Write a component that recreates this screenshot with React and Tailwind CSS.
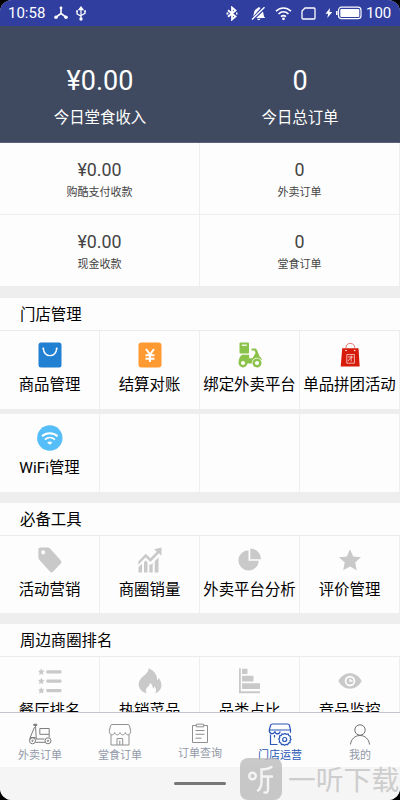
const stats = [
  ["¥0.00", "购酷支付收款"],
  ["0", "外卖订单"],
  ["¥0.00", "现金收款"],
  ["0", "堂食订单"],
];

const storeTools = [
  ["商品管理", BagIcon],
  ["结算对账", YenIcon],
  ["绑定外卖平台", ScooterIcon],
  ["单品拼团活动", GroupBuyIcon],
];

const mustHaveTools = [
  ["活动营销", TagIcon],
  ["商圈销量", TrendIcon],
  ["外卖平台分析", PieIcon],
  ["评价管理", StarIcon],
];

const rankings = [
  ["餐厅排名", RankListIcon],
  ["热销菜品", FlameIcon],
  ["品类占比", BarsIcon],
  ["竞品监控", EyeIcon],
];

const tabs = [
  ["外卖订单", DeliveryTabIcon],
  ["堂食订单", ShopTabIcon],
  ["订单查询", SearchTabIcon],
  ["门店运营", ManageTabIcon],
  ["我的", UserTabIcon],
];

function BagIcon() {
  return (
    <svg width="26" height="26" viewBox="0 0 26 26" fill="none">
      <rect x="1.500" y=".5" width="23" height="25" rx="2.500" fill="#2180d2" />
      <path d="M6.300 6.600c.5 4.400 3.200 7 6.700 7s6.200-2.600 6.700-7" stroke="#fff" strokeWidth="1.400" />
      <circle cx="6.300" cy="6.500" r="1" fill="#fff" />
      <circle cx="19.700" cy="6.500" r="1" fill="#fff" />
    </svg>
  );
}

function YenIcon() {
  return (
    <svg width="26" height="26" viewBox="0 0 26 26" fill="none">
      <rect x="1.500" y=".5" width="23" height="25" rx="3" fill="#ff9932" />
      <path d="M9 7l4 5.500L17 7M13 12v8M8.500 13.300h9M8.500 16.800h9" stroke="#fff" strokeWidth="2" />
    </svg>
  );
}

function ScooterIcon() {
  return (
    <svg width="26" height="26" viewBox="0 0 26 26" fill="none">
      <rect x="2.500" y=".5" width="9.500" height="11" rx="1" fill="#8bc34a" />
      <path d="M4.800 3.200h5" stroke="#fff" strokeWidth="1.300" />
      <path d="M14.500 6.500h4.200l1.300 1.400 2.600 6.500c1.300.9 2 2 2.200 3.600h-5.300l-3.300 3.400H1.700c-.2-4.100 1.100-7.100 3.400-8.700h7v3.500h3.400l3-5.200-1-2.500h-3z" fill="#8bc34a" />
      <circle cx="6" cy="21" r="4.400" fill="#8bc34a" />
      <circle cx="6" cy="21" r="2.100" fill="#fff" />
      <circle cx="20" cy="21" r="5.200" fill="#fdfdfd" />
      <circle cx="20" cy="21" r="4.500" fill="#8bc34a" />
      <circle cx="20" cy="21" r="2.100" fill="#fff" />
    </svg>
  );
}

function GroupBuyIcon() {
  return (
    <svg width="26" height="26" viewBox="0 0 26 26" fill="none">
      <path d="M9 8V5.500C9 3 10.800 1.400 13.300 1.400S17.700 3 17.700 5.500V8" stroke="#e0574f" strokeWidth=".8" />
      <path d="M5.200 6.300h16.300l1.200 18.300h-19z" fill="#d71b0b" />
      <circle cx="9" cy="8.500" r=".8" fill="#fff" />
      <circle cx="17.700" cy="8.500" r=".8" fill="#fff" />
      <path d="M9.800 12.500h7.600v8.700H9.800zM11 15h5.300M14.200 13.500v6M14 15.500l-3 3.500" stroke="#fbd8d4" strokeWidth=".8" />
    </svg>
  );
}

function WifiCircleIcon() {
  return (
    <svg width="26" height="26" viewBox="0 0 26 26" fill="none">
      <circle cx="12.800" cy="13" r="12.700" fill="#55bdf8" />
      <path d="M5 11.300c4.500-4.100 10.900-4.100 15.600 0M7.900 14.600c3-2.700 7-2.700 10 0" stroke="#fff" strokeWidth="1.900" />
      <path d="M10.200 17.400c1.700-1.300 3.500-1.300 5.200 0l-2.600 2.300z" fill="#fff" />
    </svg>
  );
}

function TagIcon() {
  return (
    <svg width="26" height="26" viewBox="0 0 26 26" fill="#c9c9c9">
      <path fillRule="evenodd" d="M3.300.5h7.500c.8 0 1.400.3 2 .8l11 12.300c.8.900.8 2 0 2.800l-7.900 8.400c-.8.900-2 .9-2.800 0L2.200 12.700c-.5-.6-.8-1.200-.8-2V2.300C1.400 1.200 2.200.5 3.300.5zM6.200 3.300a2 2 0 1 0 0 4.100 2 2 0 0 0 0-4.100z" />
    </svg>
  );
}

function TrendIcon() {
  return (
    <svg width="26" height="26" viewBox="0 0 26 26" fill="#c9c9c9">
      <path d="M1.300 14.600l7.400-7.800 4.700 4.500 6.300-6.500-2.500-2.500L24.500.5v8.300l-2.600-2.500-8.500 8.600L8.700 10.300l-7.400 7.500z" />
      <path d="M1.500 20l3.500-3.200v8.700H1.500zM7 15.300l1.700-1.700 1.800 1.700v10.200H7zM12.300 17l1.200 1 2.200-2v9.500h-3.400zM17.700 14.300l3.800-3.800v15h-3.800z" />
    </svg>
  );
}

function PieIcon() {
  return (
    <svg width="26" height="26" viewBox="0 0 26 26" fill="#c9c9c9">
      <path d="M11.500 3.200v10.500h10.300A10.200 10.200 0 1 1 11.500 3.200z" />
      <path d="M13.300 1.500c6 .2 10.400 4.500 10.600 10.700H13.300z" />
    </svg>
  );
}

function StarIcon() {
  return (
    <svg width="26" height="26" viewBox="0 0 26 26" fill="#c9c9c9">
      <path d="M13 2.300l3.200 7.100 7.700.9-5.700 5.200 1.500 7.800-6.700-3.900-6.800 3.900 1.500-7.800L2 10.300l7.800-.9z" />
    </svg>
  );
}

function RankListIcon() {
  return (
    <svg width="26" height="26" viewBox="0 0 26 26" fill="#c9c9c9">
      {[0, 9.3, 18.7].map((y) => (
        <g key={y} transform={`translate(0 ${y})`}>
          <path d="M4.300.4l1 2.100 2.300.3-1.700 1.600.5 2.500-2.100-1.200-2.200 1.200.5-2.500L1 2.800l2.300-.3z" />
          <rect x="9.300" y="2.200" width="15.200" height="3.300" rx="1.200" />
        </g>
      ))}
    </svg>
  );
}

function FlameIcon() {
  return (
    <svg width="26" height="26" viewBox="0 0 26 26" fill="#c9c9c9">
      <path d="M11.700.3c5.500 2.600 8.700 6.300 8.300 11.800 1-.4 1.500-1.300 1.700-2.300 4.800 6.700 3 12.900-3.500 15.500 1.500-3 .8-5.200-.9-7.100-.2 1.100-.6 1.900-1.400 2.400-.1-2.500-1-4.200-3-5.800.3 2.700-2.600 3.800-3.800 6.300-.5 1.500-.2 2.800.7 4.200-7.500-1.800-10.200-8.300-6.500-13.800C6 7.700 11.500 5.500 11.700.3z" />
    </svg>
  );
}

function BarsIcon() {
  return (
    <svg width="26" height="26" viewBox="0 0 26 26" fill="#c9c9c9">
      <path d="M2 .3h1.800v22.900h19.200v2H2z" />
      <rect x="5" y=".8" width="5.500" height="5.300" rx=".7" />
      <rect x="5" y="7.800" width="11.500" height="5.600" rx=".7" />
      <rect x="5" y="15.300" width="18" height="5.800" rx=".7" />
    </svg>
  );
}

function EyeIcon() {
  return (
    <svg width="26" height="26" viewBox="0 0 26 26" fill="none">
      <path d="M1.300 13C7 2.700 19 2.700 24.700 13 19 23.300 7 23.300 1.300 13z" fill="#c9c9c9" />
      <circle cx="13" cy="13" r="4.400" stroke="#fff" strokeWidth="1.700" />
      <path d="M13 10.800V13h2.500" stroke="#fff" strokeWidth="1.400" />
    </svg>
  );
}

function DeliveryTabIcon() {
  return (
    <svg width="26" height="24" viewBox="0 0 26 24" fill="none" stroke="#7d7d7d" strokeWidth="1">
      <path d="M6.800 1.200h3v1.300h-3z" fill="#7d7d7d" />
      <path d="M8.500 2.800L9.300 16M8.600 4.500H7.300L3.300 14.300M3 17v-2.500h5.500M12.800 5.500h9.400v5.800h-9.400zM8.500 16h9M22.200 11.300v3" />
      <circle cx="5.500" cy="17.800" r="3" />
      <circle cx="5.500" cy="17.800" r=".7" />
      <circle cx="21" cy="17.800" r="3" />
      <circle cx="21" cy="17.800" r=".7" />
      <path d="M8.500 19.300h9.500" />
    </svg>
  );
}

function ShopTabIcon() {
  return (
    <svg width="26" height="24" viewBox="0 0 26 24" fill="none" stroke="#919191" strokeWidth="1">
      <path d="M5 1.500h16c.8 0 1.300.5 1.500 1.200L23.700 8.500c.1 4-4.700 4.300-5.400 1-.8 3.100-4.500 3.100-5.300 0-.8 3.100-4.500 3.100-5.300 0-.7 3.300-5.500 3-5.400-1L3.500 2.700C3.700 2 4.200 1.500 5 1.500zM4 12v10h18V12M10 22v-6.500h5.700V22M12.800 17.500V22" />
    </svg>
  );
}

function SearchTabIcon() {
  return (
    <svg width="26" height="24" viewBox="0 0 26 24" fill="none" stroke="#8f8f8f" strokeWidth="1">
      <path d="M9 4.500H5.500v17h15v-17H17M9.300 3.200h7.400v2.600H9.300zM8.500 9.500h9M8.500 13.300h9M8.500 17.200h6" />
    </svg>
  );
}

function ManageTabIcon() {
  return (
    <svg width="26" height="24" viewBox="0 0 26 24" fill="none" stroke="#2956b8" strokeWidth="1.200">
      <path d="M5.500 1h15c1 0 1.700.5 2 1.500l1 4.500v2.800M5.500 1c-1 0-1.700.5-2 1.500L2.300 7h21.200M2.300 7c-.2 4.300 4.500 4.800 5.500 1.300.8 3.500 4.600 3.500 5.400 0M3.500 11.500v10h7M7.500 12v2.500" />
      <path d="M16.500 11.300l1.400-.9 1.500.9 1.700-.3.700 1.600 1.600.7-.2 1.700.8 1.400-1 1.400.1 1.700-1.600.6-.8 1.500-1.600-.3-1.500 1-1.400-1-1.700.2-.7-1.600-1.500-.8.3-1.600-.9-1.400 1-1.400-.1-1.700 1.600-.6.8-1.400z" />
      <circle cx="17.700" cy="16.500" r="2" />
    </svg>
  );
}

function UserTabIcon() {
  return (
    <svg width="26" height="24" viewBox="0 0 26 24" fill="none" stroke="#707070" strokeWidth="1">
      <circle cx="13" cy="7" r="5.200" />
      <path d="M3.500 21.500c.4-5.300 4.500-9 9.500-9s9.100 3.700 9.500 9" />
    </svg>
  );
}

function StatusBar() {
  return (
    <div className="flex h-[26px] shrink-0 items-center bg-[#303f9f] pl-2 pr-[7px] text-[15px] text-white">
      <span className="w-[39px]">10:58</span>
      <svg className="ml-[7px]" width="14" height="14" viewBox="0 0 14 14" fill="#fff" stroke="#fff">
        <path d="M7 2v5.500M7 7.500L2 11.200M7 7.500l5 3.700" strokeWidth="1.600" />
        <circle cx="7" cy="2" r="1.400" stroke="none" />
        <circle cx="2" cy="11.300" r="1.800" stroke="none" />
        <circle cx="12" cy="11.300" r="1.800" stroke="none" />
      </svg>
      <svg className="ml-[7px]" width="12" height="15" viewBox="0 0 12 15" fill="none" stroke="#fff" strokeWidth="1.200">
        <path d="M6 1.500V13M2 5.500v2.300l4 2.500M10 5.500v1.800L6 9.500M4 3.700L6 1l2 2.700z" />
        <circle cx="6" cy="13" r="1.100" fill="#fff" />
        <path d="M1.200 5.300h1.700M9.200 5.300h1.700" strokeWidth="2" />
      </svg>
      <svg className="ml-auto" width="12" height="15" viewBox="0 0 12 15" fill="none" stroke="#fff" strokeWidth="1.800">
        <path d="M2 4.300l7.500 6.200L6 13.500v-12l3.500 3L2 10.800" />
        <path d="M.5 7.500h2M10 7.500h1.500" />
      </svg>
      <svg className="ml-[13px]" width="15" height="15" viewBox="0 0 15 15" fill="#fff">
        <path d="M6 2.500l1-.8c1-.9 2 0 2.500.6L2.200 10.500l.8-3.800C3.500 4.500 4.300 3.300 6 2.500zM12 5.500l1 5 1.300 1.500H5.200zM6 12.800h3.500c-.6 1.800-2.900 1.800-3.500 0z" />
        <path d="M13.500 1.300L1 13.500" stroke="#fff" strokeWidth="1.400" />
      </svg>
      <svg className="ml-[9px]" width="17" height="15" viewBox="0 0 17 15" fill="none" stroke="#fff" strokeWidth="1.600">
        <path d="M1 5.200c4.500-4.200 10.500-4.200 15 0M3.500 8c3-2.800 7-2.800 10 0M6 10.700c1.600-1.400 3.400-1.400 5 0" />
        <circle cx="8.500" cy="12.800" r=".6" fill="#fff" />
      </svg>
      <svg className="ml-[9px]" width="15" height="13" viewBox="0 0 15 13" fill="none" stroke="#fff" strokeWidth="1.300">
        <path d="M4 1h9c.6 0 1 .4 1 1v9c0 .6-.4 1-1 1H2c-.6 0-1-.4-1-1V4z" />
      </svg>
      <svg className="ml-[9px]" width="8" height="12" viewBox="0 0 8 12" fill="#fff">
        <path d="M5 1L.5 6.700h2.700L2.300 11 7.300 5H4.500z" />
      </svg>
      <svg className="ml-[3px]" width="26" height="14" viewBox="0 0 26 14" fill="none">
        <rect x="2.500" y="1.200" width="22.500" height="11.500" rx="3" stroke="#fff" strokeWidth="1.200" />
        <rect x="4.300" y="3" width="19" height="8" rx="1" fill="#fff" />
        <path d="M.8 5v4" stroke="#fff" strokeWidth="1.500" />
      </svg>
      <span className="ml-[4px] w-[27px]">100</span>
    </div>
  );
}

function Tile({ label, Icon }) {
  return (
    <div className="flex h-[77.5px] flex-col items-center whitespace-nowrap border-r border-[#eeeeee] pt-[11px]">
      {Icon && <Icon />}
      {label && <span className="mt-[6px] text-[15.400px] leading-[22px] text-black">{label}</span>}
    </div>
  );
}

function TileRow({ items }) {
  return (
    <div className="grid shrink-0 grid-cols-4 bg-[#fdfdfd]">
      {items.map(([label, Icon], i) => (
        <Tile key={i} label={label} Icon={Icon} />
      ))}
    </div>
  );
}

function SectionTitle({ children }) {
  return (
    <h2 className="h-[33px] shrink-0 border-b border-[#ebebeb] bg-[#fdfdfd] pl-5 pt-px text-[15.400px] leading-[32px] text-black">
      {children}
    </h2>
  );
}

function Watermark() {
  return (
    <div className="absolute left-[240px] top-[758px] flex h-[42px] items-center whitespace-nowrap">
      <svg width="42" height="42" viewBox="0 0 42 42" fill="none">
        <rect width="42" height="42" rx="8" fill="#bcbcbc" fillOpacity=".8" />
        <g stroke="#f4f4f4" strokeWidth="2.400" strokeLinecap="round">
          <circle cx="12.500" cy="18" r="3.300" />
          <path d="M31.500 9c-3 2-6 2.500-10 2.500v12c0 4-1 7-3.500 9M22 18.500h10M28 18.500V32c0 2-1.500 3-3.500 2.500" />
        </g>
      </svg>
      <span className="ml-[6px] pt-[3px] text-[27.800px] leading-[39px] text-[#cdcdcd]">一听下载</span>
    </div>
  );
}

export default function App() {
  return (
    <div className="relative h-[800px] w-[400px] overflow-hidden bg-black font-['Roboto','Noto_Sans_CJK_SC',sans-serif]">
      <div className="flex h-full flex-col overflow-hidden rounded-[12px] bg-[#eeeeee]">
        <StatusBar />

        <header className="grid h-[117px] shrink-0 grid-cols-2 border-b border-[#59627a] bg-[#3f4a60] text-center text-white">
          <div className="pt-[39px]">
            <div className="text-[27px] leading-8">¥0.00</div>
            <div className="mt-[10px] text-[15.400px] leading-[22px]">今日堂食收入</div>
          </div>
          <div className="pt-[39px]">
            <div className="text-[27px] leading-8">0</div>
            <div className="mt-[10px] text-[15.400px] leading-[22px]">今日总订单</div>
          </div>
        </header>

        <section className="grid shrink-0 grid-cols-2 bg-[#fdfdfd] text-center text-[#444]">
          {stats.map(([value, label]) => (
            <div key={label} className="h-[72px] border-b border-r border-[#eeeeee] pt-[17px]">
              <div className="text-[17.800px] leading-5">{value}</div>
              <div className="mt-[5px] text-[11px] leading-4">{label}</div>
            </div>
          ))}
        </section>

        <main className="flex min-h-0 flex-1 flex-col overflow-hidden pt-[11px]">
          <SectionTitle>门店管理</SectionTitle>
          <TileRow items={storeTools} />
          <div className="h-[5.500px] shrink-0" />
          <TileRow items={[["WiFi管理", WifiCircleIcon], [], [], []]} />
          <div className="h-[11px] shrink-0" />
          <SectionTitle>必备工具</SectionTitle>
          <TileRow items={mustHaveTools} />
          <div className="h-[11px] shrink-0" />
          <SectionTitle>周边商圈排名</SectionTitle>
          <TileRow items={rankings} />
        </main>

        <nav className="grid h-[55px] shrink-0 grid-cols-5 border-t border-[#c4c4cc] bg-[#fdfdfd]">
          {tabs.map(([label, Icon]) => (
            <div
              key={label}
              className={`flex flex-col items-center text-[11px] leading-4 ${label === "订单查询" ? "pt-[8px]" : "pt-[10px]"} ${label === "门店运营" ? "text-[#2956b8]" : "text-[#9299a8]"}`}
            >
              <Icon />
              <span className="mt-px">{label}</span>
            </div>
          ))}
        </nav>

        <div className="flex h-[33px] shrink-0 justify-center bg-[#f5f5f5] pt-[15px]">
          <div className="h-[3px] w-[52px] rounded-full bg-[#777]" />
        </div>
      </div>
      <Watermark />
    </div>
  );
}
